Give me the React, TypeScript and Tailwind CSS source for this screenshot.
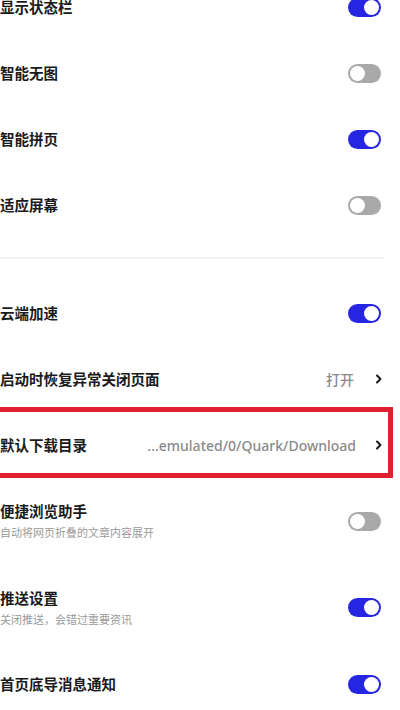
import React from 'react';

const Toggle: React.FC<{ on: boolean }> = ({ on }) => (
  <div
    className={`w-[33px] h-[19px] rounded-full flex items-center px-[2px] shrink-0 ${
      on ? 'bg-[#2626e2] justify-end' : 'bg-[#a9a9a9] justify-start'
    }`}
  >
    <div className="w-[15px] h-[15px] rounded-full bg-white" />
  </div>
);

const Chevron: React.FC = () => (
  <svg width="8" height="10" viewBox="0 0 8 10" className="shrink-0">
    <path d="M2 1.5 L5.5 5 L2 8.5" fill="none" stroke="#1a1a1a" strokeWidth="2" strokeLinecap="round" strokeLinejoin="round" />
  </svg>
);

const Row: React.FC<{ title: string; sub?: string; children: React.ReactNode; h?: string; pr?: string }> = ({ title, sub, children, h, pr }) => (
  <div className={`flex items-center justify-between ${pr ?? 'pr-[19px]'} ${h ?? 'h-[66px]'}`}>
    <div className="flex flex-col">
      <span className="text-[14.5px] font-bold text-[#1a1a1a] leading-[20px]">{title}</span>
      {sub && <span className="text-[11px] text-[#9a9a9a] leading-[16px] mt-[4px]">{sub}</span>}
    </div>
    {children}
  </div>
);

const App: React.FC = () => {
  return (
    <div
      className="w-[400px] h-[710px] overflow-hidden bg-white"
      style={{ fontFamily: '"Noto Sans", "Noto Sans CJK SC", sans-serif' }}
    >
      <div className="-mt-[26px]">
        <Row title="显示状态栏"><Toggle on /></Row>
        <Row title="智能无图"><Toggle on={false} /></Row>
        <Row title="智能拼页"><Toggle on /></Row>
        <Row title="适应屏幕"><Toggle on={false} /></Row>

        <div className="pt-[19px] pb-[21px] pr-[16px]">
          <div className="h-[2px] bg-[#f0f0f0]" />
        </div>

        <Row title="云端加速"><Toggle on /></Row>
        <Row title="启动时恢复异常关闭页面" pr="pr-[17px]">
          <div className="flex items-center gap-[21px]">
            <span className="text-[14px] font-medium text-[#8a8a8a]">打开</span>
            <Chevron />
          </div>
        </Row>

        <div className="relative">
          <Row title="默认下载目录" pr="pr-[17px]">
            <div className="flex items-center gap-[19px]">
              <span className="text-[14px] font-medium text-[#8a8a8a]">...emulated/0/Quark/Download</span>
              <Chevron />
            </div>
          </Row>
          <div className="absolute -top-[5px] bottom-0 -left-[6px] w-[399px] border-[5px] border-[#e0202e]" />
        </div>

        <Row title="便捷浏览助手" sub="自动将网页折叠的文章内容展开" h="h-[86px]"><Toggle on={false} /></Row>
        <Row title="推送设置" sub="关闭推送，会错过重要资讯" h="h-[87px]"><Toggle on /></Row>
        <Row title="首页底导消息通知"><Toggle on /></Row>
      </div>
    </div>
  );
};

export default App;
